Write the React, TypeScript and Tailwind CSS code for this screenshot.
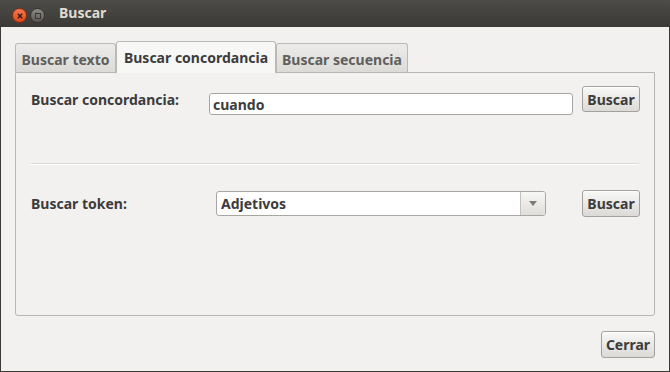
import React from "react";

function GtkButton({ label, className = "" }: { label: string; className?: string }) {
  return (
    <button
      className={
        "shrink-0 rounded-[3px] border border-[#a3a19d] bg-gradient-to-b from-[#f8f8f7] to-[#dcdad7] text-[14px] leading-[19px] font-bold text-[#3c3c3c] shadow-[inset_0_1px_0_#ffffff] " +
        className
      }
    >
      {label}
    </button>
  );
}

export default function App() {
  return (
    <div className="flex h-[372px] w-[670px] flex-col overflow-hidden bg-[#3c3b37] font-['Noto_Sans','DejaVu_Sans',sans-serif]">
      {/* Title bar */}
      <div className="flex h-[27px] shrink-0 items-start bg-gradient-to-b from-[#4d4c48] to-[#3b3a36] pl-[12px]">
        <div className="mt-[8px] flex h-[15px] w-[15px] items-center justify-center rounded-full border border-[#8a2c10] bg-gradient-to-b from-[#f47a52] to-[#dd4814]">
          <svg width="6" height="6" viewBox="0 0 6 6">
            <path d="M0.8 0.8 L5.2 5.2 M5.2 0.8 L0.8 5.2" stroke="#3a1a0c" strokeWidth="1.4" />
          </svg>
        </div>
        <div className="mt-[8px] ml-[3px] flex h-[15px] w-[15px] items-center justify-center rounded-full border border-[#353430] bg-gradient-to-b from-[#8e8c87] to-[#5a5854]">
          <div className="h-[6px] w-[6px] border border-[#3a3936]" />
        </div>
        <span className="mt-[3px] ml-[14px] text-[14px] leading-[19px] font-bold text-[#dfdbd2]">Buscar</span>
      </div>

      {/* Body */}
      <div className="mx-[1px] mb-[1px] flex flex-1 flex-col bg-[#f2f1f0] px-[14px] pt-[14px]">
        {/* Tabs */}
        <div className="flex h-[31px] items-end">
          <div className="flex h-[29px] w-[101px] items-start justify-center rounded-t-[3px] border border-b-0 border-[#bbb9b5] bg-gradient-to-b from-[#ecebea] to-[#dddbd8] pt-[6px] text-[14px] leading-[19px] font-bold text-[#605f5c]">
            Buscar texto
          </div>
          <div className="z-10 mb-[-1px] flex h-[32px] w-[160px] items-start justify-center rounded-t-[3px] border border-b-0 border-[#bbb9b5] bg-[#f7f7f6] pt-[6px] text-[14px] leading-[19px] font-bold text-[#3c3c3c]">
            Buscar concordancia
          </div>
          <div className="flex h-[29px] w-[132px] items-start justify-center rounded-t-[3px] border border-b-0 border-[#bbb9b5] bg-gradient-to-b from-[#ecebea] to-[#dddbd8] pt-[6px] text-[14px] leading-[19px] font-bold text-[#605f5c]">
            Buscar secuencia
          </div>
        </div>

        {/* Panel */}
        <div className="flex h-[244px] flex-col rounded-b-[3px] border border-[#b8b6b2] bg-[#f2f1f0] px-[15px]">
          <div className="mt-[13px] flex items-start">
            <span className="mt-[4px] w-[178px] shrink-0 text-[14px] leading-[19px] font-bold text-[#3c3c3c]">Buscar concordancia:</span>
            <div className="mt-[7px] flex h-[22px] w-[364px] shrink-0 items-center rounded-[3px] border border-[#a8a6a2] bg-white pl-[3px] text-[14px] leading-[19px] font-bold text-[#3c3c3c]">
              cuando
            </div>
            <GtkButton label="Buscar" className="ml-[9px] h-[26px] w-[58px]" />
          </div>

          <div className="mt-[48px] h-[1px] bg-[#dcdad6] shadow-[0_1px_0_#ffffff]" />

          <div className="mt-[26px] flex items-start">
            <span className="mt-[4px] w-[185px] shrink-0 text-[14px] leading-[19px] font-bold text-[#3c3c3c]">Buscar token:</span>
            <div className="mt-[1px] flex h-[25px] w-[330px] shrink-0 items-stretch overflow-hidden rounded-[3px] border border-[#a8a6a2] bg-white">
              <span className="flex flex-1 items-center pl-[4px] text-[14px] leading-[19px] font-bold text-[#3c3c3c]">Adjetivos</span>
              <span className="flex w-[25px] items-center justify-center border-l border-[#c4c2be] bg-gradient-to-b from-[#f7f7f6] to-[#e0deda]">
                <svg width="8" height="5" viewBox="0 0 8 5">
                  <path d="M0 0 H8 L4 5 Z" fill="#7c7b78" />
                </svg>
              </span>
            </div>
            <GtkButton label="Buscar" className="ml-[36px] h-[27px] w-[58px]" />
          </div>
        </div>

        <div className="mt-[15px] flex justify-end">
          <GtkButton label="Cerrar" className="h-[27px] w-[54px]" />
        </div>
      </div>
    </div>
  );
}
